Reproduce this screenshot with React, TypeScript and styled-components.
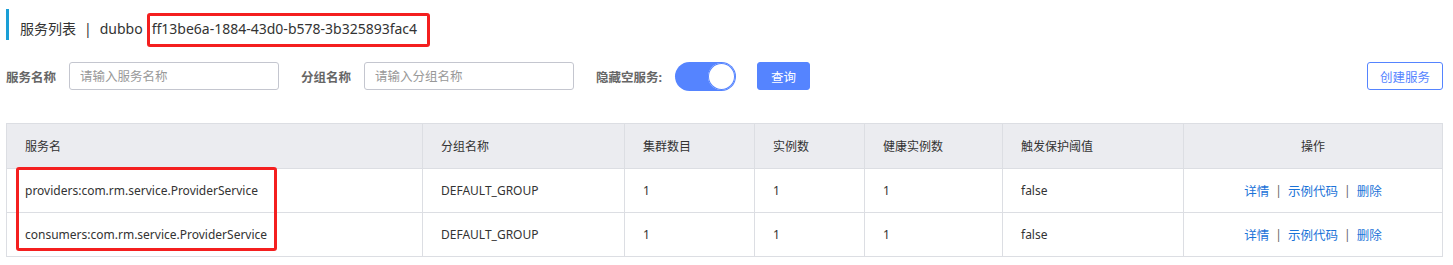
import React from 'react'
import styled, { createGlobalStyle } from 'styled-components'

const GlobalStyle = createGlobalStyle`
  html, body {
    margin: 0;
    padding: 0;
    background: #fff;
  }
  body {
    font-family: "Noto Sans", "Noto Sans CJK SC", sans-serif;
    color: #333;
  }
`

const Page = styled.div`
  padding: 9px 10px 0 6px;
  box-sizing: border-box;
  width: 1453px;
`

// page heading: blue marker + breadcrumb + namespace id
const TitleRow = styled.div`
  display: flex;
  align-items: center;
  height: 38px;
  font-size: 14px;
  color: #333;
  white-space: nowrap;
`

const TitleMark = styled.div`
  align-self: flex-start;
  width: 3px;
  height: 31px;
  background: #1a9fd6;
  margin-right: 11px;
`

const TitleSep = styled.span`
  margin: 0 8px;
`

const Highlight = styled.span`
  align-self: flex-end;
  display: inline-flex;
  align-items: center;
  height: 34px;
  box-sizing: border-box;
  margin-left: 4px;
  padding: 0 10px 3px 2px;
  border: 3px solid #f41f1f;
  border-radius: 3px;
`

const FilterRow = styled.div`
  display: flex;
  align-items: center;
  margin-top: 15px;
  height: 28px;
`

const Label = styled.label`
  font-size: 12.5px;
  font-weight: 700;
  color: #666;
  margin-right: 13px;
  white-space: nowrap;
`

const Input = styled.input`
  width: 210px;
  height: 28px;
  box-sizing: border-box;
  border: 1px solid #c4c6cf;
  border-radius: 3px;
  padding: 0 10px;
  font-size: 12.5px;
  font-family: inherit;
  color: #333;
  margin-right: 22px;
  outline: none;
  &::placeholder {
    color: #999;
  }
`

const Switch = styled.div<{ $on: boolean }>`
  width: 61px;
  height: 29px;
  box-sizing: border-box;
  border-radius: 15px;
  background: ${({ $on }) => ($on ? '#5584ff' : '#e8e8e8')};
  display: flex;
  align-items: center;
  justify-content: ${({ $on }) => ($on ? 'flex-end' : 'flex-start')};
  padding: 0 1px;
  margin-right: 21px;
`

const Knob = styled.div`
  width: 27px;
  height: 27px;
  border-radius: 50%;
  background: #fff;
  box-shadow: 0 0 0 1px #5584ff inset;
`

const Button = styled.button<{ $primary?: boolean }>`
  height: 28px;
  padding: 0 ${({ $primary }) => ($primary ? 13 : 12)}px;
  box-sizing: border-box;
  border-radius: 3px;
  font-size: 12.5px;
  font-family: inherit;
  cursor: pointer;
  border: 1px solid #5584ff;
  background: ${({ $primary }) => ($primary ? '#5584ff' : '#fff')};
  color: ${({ $primary }) => ($primary ? '#fff' : '#5584ff')};
`

const Spacer = styled.div`
  flex: 1;
`

const TableWrap = styled.div`
  position: relative;
  margin-top: 33px;
  border: 1px solid #dcdee3;
  font-size: 12px;
`

const Row = styled.div<{ $head?: boolean }>`
  display: grid;
  grid-template-columns: 415px 202px 130px 110px 138px 181px 1fr;
  height: ${({ $head }) => ($head ? 44 : 43)}px;
  background: ${({ $head }) => ($head ? '#ebecf0' : '#fff')};
  border-top: ${({ $head }) => ($head ? 'none' : '1px solid #dcdee3')};
`

const Cell = styled.div<{ $center?: boolean }>`
  display: flex;
  align-items: center;
  justify-content: ${({ $center }) => ($center ? 'center' : 'flex-start')};
  padding: 0 18px;
  color: #333;
  white-space: nowrap;
  overflow: hidden;
  & + & {
    border-left: 1px solid #dcdee3;
  }
`

const Link = styled.a`
  color: #1b73d8;
  text-decoration: none;
  cursor: pointer;
  font-size: 12.5px;
`

const LinkSep = styled.span`
  margin: 0 6px;
  color: #666;
`

const Annotation = styled.div`
  position: absolute;
  left: 9px;
  top: 43px;
  width: 261px;
  height: 84px;
  box-sizing: border-box;
  border: 3px solid #f41f1f;
  border-radius: 3px;
  pointer-events: none;
`

const columns = ['服务名', '分组名称', '集群数目', '实例数', '健康实例数', '触发保护阈值']

const rows = [
  { name: 'providers:com.rm.service.ProviderService', group: 'DEFAULT_GROUP', clusters: 1, ips: 1, healthy: 1, threshold: 'false' },
  { name: 'consumers:com.rm.service.ProviderService', group: 'DEFAULT_GROUP', clusters: 1, ips: 1, healthy: 1, threshold: 'false' },
]

export default function App() {
  return (
    <Page>
      <GlobalStyle />
      <TitleRow>
        <TitleMark />
        服务列表<TitleSep>|</TitleSep>dubbo
        <Highlight>ff13be6a-1884-43d0-b578-3b325893fac4</Highlight>
      </TitleRow>

      <FilterRow>
        <Label>服务名称</Label>
        <Input placeholder="请输入服务名称" />
        <Label>分组名称</Label>
        <Input placeholder="请输入分组名称" />
        <Label>隐藏空服务:</Label>
        <Switch $on>
          <Knob />
        </Switch>
        <Button $primary>查询</Button>
        <Spacer />
        <Button>创建服务</Button>
      </FilterRow>

      <TableWrap>
        <Row $head>
          {columns.map((c) => (
            <Cell key={c}>{c}</Cell>
          ))}
          <Cell $center>操作</Cell>
        </Row>
        {rows.map((r) => (
          <Row key={r.name}>
            <Cell>{r.name}</Cell>
            <Cell>{r.group}</Cell>
            <Cell>{r.clusters}</Cell>
            <Cell>{r.ips}</Cell>
            <Cell>{r.healthy}</Cell>
            <Cell>{r.threshold}</Cell>
            <Cell $center>
              <Link>详情</Link>
              <LinkSep>|</LinkSep>
              <Link>示例代码</Link>
              <LinkSep>|</LinkSep>
              <Link>删除</Link>
            </Cell>
          </Row>
        ))}
        <Annotation />
      </TableWrap>
    </Page>
  )
}
